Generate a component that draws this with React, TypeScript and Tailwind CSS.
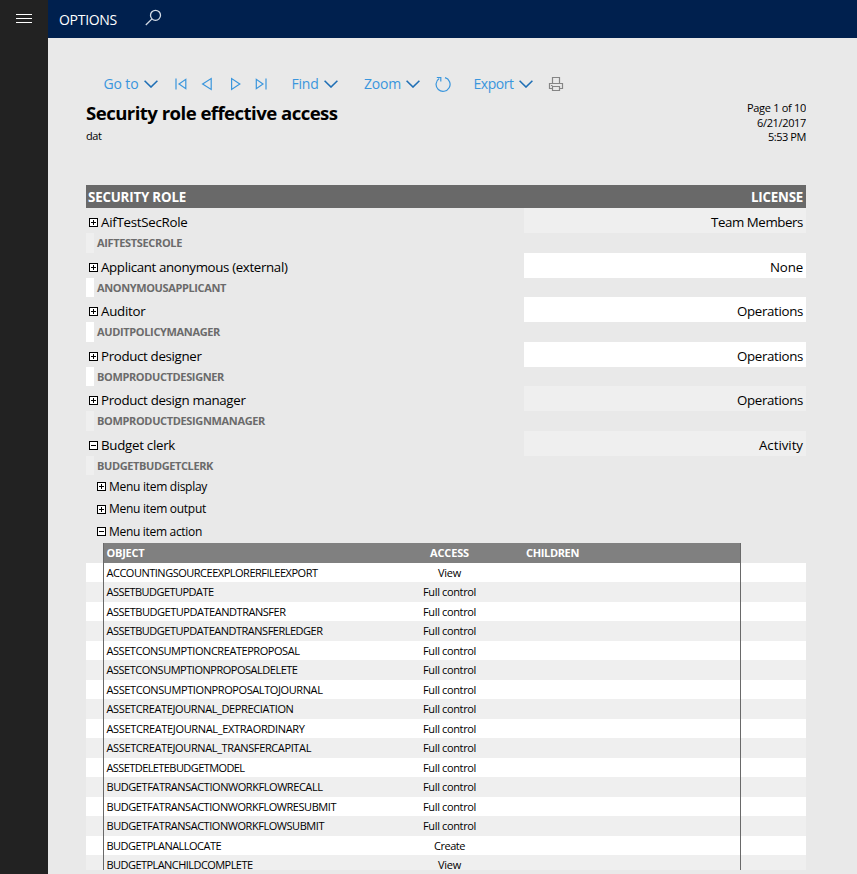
import { useLayoutEffect, useRef, type ReactNode } from 'react';

/** Single-line label whose tracking is tuned so that it fills the given width. */
function Label({ w, className = '', children }: { w: number; className?: string; children: string }) {
  const ref = useRef<HTMLSpanElement>(null);
  useLayoutEffect(() => {
    const el = ref.current;
    if (!el) return;
    el.style.letterSpacing = '0px';
    const natural = el.getBoundingClientRect().width;
    el.style.letterSpacing = `${(w - natural) / children.length}px`;
  }, [w, children]);
  return (
    <span ref={ref} className={`inline-block shrink-0 whitespace-pre ${className}`}>
      {children}
    </span>
  );
}

function Chevron() {
  return (
    <svg width="14" height="8" viewBox="0 0 14 8" fill="none" stroke="#1f6fb5" strokeWidth="1.6">
      <path d="M.6.8 7 7 13.4.8" />
    </svg>
  );
}

function Toggle({ open }: { open?: boolean }) {
  return (
    <svg className="shrink-0" width="9" height="9" viewBox="0 0 9 9" fill="none" stroke="#000" shapeRendering="crispEdges">
      <rect x=".5" y=".5" width="8" height="8" fill="#fff" />
      <path d={open ? 'M2 4.5h5' : 'M2 4.5h5M4.5 2v5'} />
    </svg>
  );
}

function MenuButton({ label, w, className = '' }: { label: string; w: number; className?: string }) {
  return (
    <button className={`flex h-5 items-center gap-[5px] text-[14px] leading-5 text-[#3a96dd] ${className}`}>
      <Label w={w}>{label}</Label>
      <Chevron />
    </button>
  );
}

function Nav({ d, className = '' }: { d: string; className?: string }) {
  return (
    <svg className={`shrink-0 ${className}`} width="12" height="14" viewBox="0 0 12 14" fill="none" stroke="#3a96dd" strokeWidth="1.2">
      <path d={d} />
    </svg>
  );
}

type Role = { name: string; w: number; id: string; idW: number; license: string; licW: number; white?: boolean; short?: boolean; open?: boolean };

const roles: Role[] = [
  { name: 'AifTestSecRole', w: 86.5, id: 'AIFTESTSECROLE', idW: 85, license: 'Team Members', licW: 92 },
  { name: 'Applicant anonymous (external)', w: 186.5, id: 'ANONYMOUSAPPLICANT', idW: 129, license: 'None', licW: 33, white: true, short: true },
  { name: 'Auditor', w: 44.5, id: 'AUDITPOLICYMANAGER', idW: 123, license: 'Operations', licW: 66, white: true },
  { name: 'Product designer', w: 100.5, id: 'BOMPRODUCTDESIGNER', idW: 127, license: 'Operations', licW: 66, white: true, short: true },
  { name: 'Product design manager', w: 144.5, id: 'BOMPRODUCTDESIGNMANAGER', idW: 168, license: 'Operations', licW: 66 },
  { name: 'Budget clerk', w: 74, id: 'BUDGETBUDGETCLERK', idW: 116, license: 'Activity', licW: 44, short: true, open: true },
];

const objects: [string, number, string][] = [
  ['ACCOUNTINGSOURCEEXPLORERFILEEXPORT', 211, 'View'],
  ['ASSETBUDGETUPDATE', 107, 'Full control'],
  ['ASSETBUDGETUPDATEANDTRANSFER', 179, 'Full control'],
  ['ASSETBUDGETUPDATEANDTRANSFERLEDGER', 216, 'Full control'],
  ['ASSETCONSUMPTIONCREATEPROPOSAL', 193, 'Full control'],
  ['ASSETCONSUMPTIONPROPOSALDELETE', 191, 'Full control'],
  ['ASSETCONSUMPTIONPROPOSALTOJOURNAL', 216, 'Full control'],
  ['ASSETCREATEJOURNAL_DEPRECIATION', 187, 'Full control'],
  ['ASSETCREATEJOURNAL_EXTRAORDINARY', 198, 'Full control'],
  ['ASSETCREATEJOURNAL_TRANSFERCAPITAL', 204.5, 'Full control'],
  ['ASSETDELETEBUDGETMODEL', 138, 'Full control'],
  ['BUDGETFATRANSACTIONWORKFLOWRECALL', 216, 'Full control'],
  ['BUDGETFATRANSACTIONWORKFLOWRESUBMIT', 229.5, 'Full control'],
  ['BUDGETFATRANSACTIONWORKFLOWSUBMIT', 217.5, 'Full control'],
  ['BUDGETPLANALLOCATE', 114.5, 'Create'],
  ['BUDGETPLANCHILDCOMPLETE', 146, 'View'],
];

const accessWidth: Record<string, number> = { View: 23, 'Full control': 53, Create: 31 };

function RoleBlock({ role }: { role: Role }) {
  const tint = role.white ? 'bg-white' : 'bg-[#efefef]';
  return (
    <div>
      <div className="flex h-[25px] justify-between">
        <div className="flex items-start gap-[3px] pt-1 pl-[3px] text-[13.3px] leading-5">
          <span className="flex h-[21px] items-center">
            <Toggle open={role.open} />
          </span>
          <Label w={role.w}>{role.name}</Label>
        </div>
        <div className={`flex w-[282px] items-start justify-end pt-1 pr-[3px] text-[13.3px] leading-5 ${tint}`}>
          <Label w={role.licW}>{role.license}</Label>
        </div>
      </div>
      <div className={`flex items-center ${role.short ? 'h-[19px]' : 'h-5'}`}>
        <div className={`h-full w-2 ${tint}`} />
        <Label w={role.idW} className="ml-[3px] text-[11px] leading-4 font-bold text-[#6b6b6b]">
          {role.id}
        </Label>
      </div>
    </div>
  );
}

function MenuItem({ open, w, className, children }: { open?: boolean; w: number; className: string; children: string }) {
  return (
    <div className={`flex items-center gap-[3px] pl-[11px] text-[12px] leading-4 ${className}`}>
      <Toggle open={open} />
      <Label w={w}>{children}</Label>
    </div>
  );
}

function Cells({ a, b, c }: { a: ReactNode; b: ReactNode; c?: ReactNode }) {
  return (
    <div className="ml-[17px] flex h-full w-[638px] items-center border-x border-[#696969] pl-[2.5px]">
      <div className="w-[283px]">{a}</div>
      <div className="flex w-[120px] justify-center">{b}</div>
      <div className="pl-[16.5px]">{c}</div>
    </div>
  );
}

export default function App() {
  return (
    <div className="flex h-[874px] w-[857px] overflow-hidden bg-[#e9e9e9] font-['Open_Sans','Noto_Sans',sans-serif] text-black">
      <aside className="w-12 shrink-0 bg-[#222222] pt-[14px] pl-4">
        <div className="flex flex-col gap-[3px]">
          <div className="h-px w-4 bg-white" />
          <div className="h-px w-4 bg-white" />
          <div className="h-px w-4 bg-white" />
        </div>
      </aside>
      <div className="flex grow flex-col">
        <header className="flex h-[38px] shrink-0 items-center bg-[#00204e] pl-[11px] text-[14px] text-white">
          <Label w={58} className="pt-[2px] leading-5">OPTIONS</Label>
          <svg className="mb-1 ml-[28px]" width="17" height="17" viewBox="0 0 17 17" fill="none" stroke="#d5dce6" strokeWidth="1.3">
            <circle cx="10.5" cy="6.3" r="5" />
            <path d="M7 9.9.8 16" />
          </svg>
        </header>

        <main className="flex h-[832px] w-[758px] flex-col overflow-hidden pl-[38px]">
          <div className="mt-[36px] flex h-5 shrink-0 items-center pl-[17.5px]">
            <MenuButton label="Go to" w={35} />
            <Nav className="ml-[17px]" d="M1 1.5v11M10.8 2.3v9.4L4 7z" />
            <Nav className="ml-[14px]" d="M10.2 1.6v10.8L1.6 7z" />
            <Nav className="ml-[17px]" d="M1.6 1.6v10.8L9.8 7z" />
            <Nav className="ml-[13px]" d="M11 1.5v11M1.3 2.3v9.4L8 7z" />
            <MenuButton label="Find" w={27} className="ml-[25px]" />
            <MenuButton label="Zoom" w={37} className="ml-[26.5px]" />
            <svg className="ml-[15px]" width="16" height="16" viewBox="0 0 16 16" fill="none" stroke="#3a96dd" strokeWidth="1.2">
              <path d="M4.2 2.5A7 7 0 1 0 10 1.6M1.8 1.5h4v4" />
            </svg>
            <MenuButton label="Export" w={40} className="ml-[22.5px]" />
            <svg className="ml-[15px]" width="16" height="16" viewBox="0 0 16 16" fill="none" stroke="#858585" strokeWidth="1.2">
              <path d="M4.5 7.5v-6h7v6M4 12.5H1.5v-5h13v5H12M4.5 10.5h7v4h-7zM3 9.5h1.5" />
            </svg>
          </div>

          <div className="flex h-[91px] shrink-0 justify-between">
            <div>
              <h1 className="pt-[7px] text-[18.6px] leading-6 font-bold">
                <Label w={251.5}>Security role effective access</Label>
              </h1>
              <p className="mt-[3px] text-[11px] leading-[15px]">
                <Label w={15.5}>dat</Label>
              </p>
            </div>
            <div className="flex flex-col items-end pt-[7px] text-[11px] leading-[14.5px]">
              <Label w={59}>Page 1 of 10</Label>
              <Label w={49}>6/21/2017</Label>
              <Label w={38}>5:53 PM</Label>
            </div>
          </div>

          <div className="flex h-[23px] shrink-0 items-center justify-between bg-[#696969] pr-[3px] pl-[2px] text-[13.3px] leading-5 font-bold text-white">
            <Label w={98}>SECURITY ROLE</Label>
            <Label w={52}>LICENSE</Label>
          </div>

          {roles.map((r) => (
            <RoleBlock key={r.id} role={r} />
          ))}

          <MenuItem w={98} className="h-[23px] shrink-0">Menu item display</MenuItem>
          <MenuItem w={97} className="h-[22px] shrink-0">Menu item output</MenuItem>
          <MenuItem open w={93} className="h-[23px] shrink-0">Menu item action</MenuItem>

          <div className="h-5 shrink-0 bg-[linear-gradient(to_right,transparent_17px,#808080_17px,#808080_655px,transparent_655px)] text-[11px] leading-4 font-bold text-white">
            <Cells
              a={<Label w={38}>OBJECT</Label>}
              b={<Label w={39}>ACCESS</Label>}
              c={<Label w={53}>CHILDREN</Label>}
            />
          </div>
          {objects.map(([name, w, access], i) => (
            <div
              key={name}
              className={`shrink-0 text-[11px] leading-4 ${i % 2 ? 'h-5 bg-[#efefef]' : 'h-[19px] bg-white'}`}
            >
              <Cells a={<Label w={w}>{name}</Label>} b={<Label w={accessWidth[access]}>{access}</Label>} />
            </div>
          ))}
        </main>
      </div>
    </div>
  );
}
